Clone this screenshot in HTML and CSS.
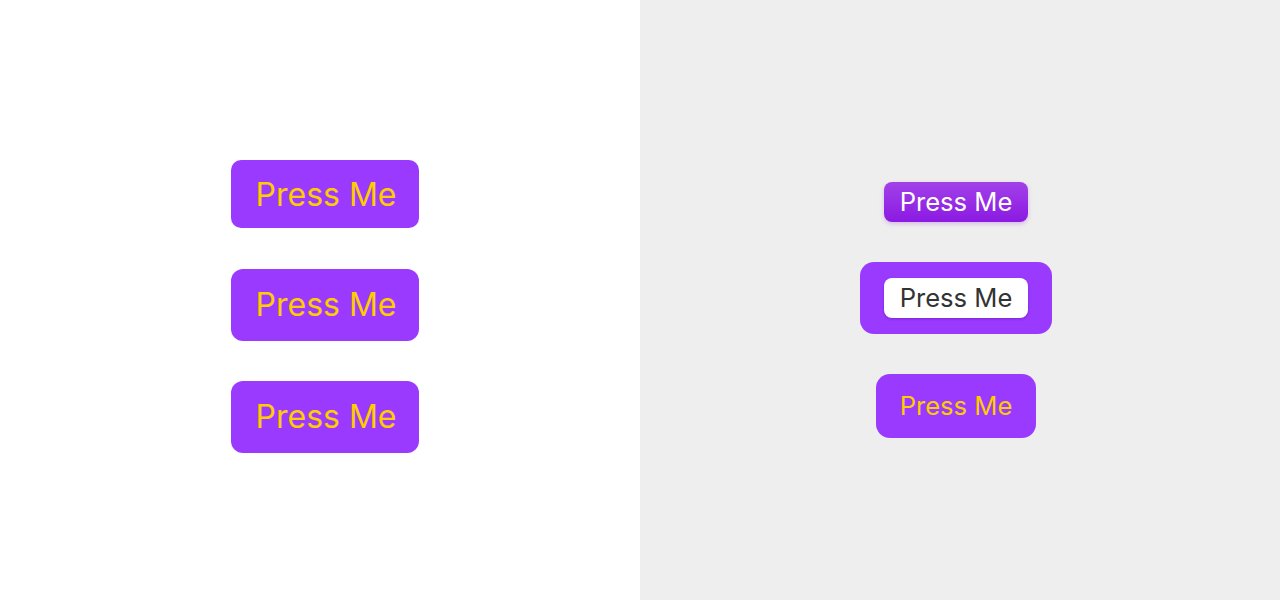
FILE: index.html
```html
<!DOCTYPE html>
<html>
<head>
<meta charset="utf-8">
<link rel="stylesheet" href="styles.css">
</head>
<body>
<div class="page">
  <div class="panel panel-left">
    <button class="btn big first">Press Me</button>
    <button class="btn big">Press Me</button>
    <button class="btn big">Press Me</button>
  </div>
  <div class="panel panel-right">
    <button class="btn grad">Press Me</button>
    <div class="frame"><button class="btn inner">Press Me</button></div>
    <button class="btn mid">Press Me</button>
  </div>
</div>
</body>
</html>
```
FILE: styles.css
```css
html, body { margin: 0; padding: 0; }
body { font-family: Inter, "Noto Sans", sans-serif; }
.page { display: grid; grid-template-columns: 640px 640px; height: 600px; }
.panel { display: flex; flex-direction: column; align-items: center; justify-content: center; box-sizing: border-box; }
.panel-left { background: #ffffff; padding-left: 10px; padding-top: 13px; gap: 40px; }
.panel-right { background: #eeeeee; padding-right: 8px; padding-top: 20px; gap: 40px; }
.btn { border: none; font-family: Inter, "Noto Sans", sans-serif; margin: 0; cursor: pointer; white-space: nowrap; box-sizing: border-box; }
.big { background: #9a3aff; color: #ffcc00; font-size: 32px; line-height: 40px; padding: 16px 23px 16px 25px; border-radius: 12px; }
.big.first { padding: 15px 23px 13px 25px; border-radius: 10px; margin-bottom: 1px; }
.grad { background: linear-gradient(#a241e8, #8b1ae2); color: #ffffff; font-size: 25.6px; line-height: 32px; padding: 4px 16px; border-radius: 8px; box-shadow: 0 2px 4px rgba(140, 40, 220, 0.25); }
.frame { background: #9a3aff; padding: 16px 24px; border-radius: 14px; display: flex; }
.inner { background: #ffffff; color: #333333; font-size: 25.6px; line-height: 32px; padding: 4px 16px; border-radius: 8px; box-shadow: 0 1px 3px rgba(60, 0, 120, 0.35); }
.mid { background: #9a3aff; color: #ffcc00; font-size: 25.6px; line-height: 32px; padding: 16px 24px; border-radius: 14px; }
```
